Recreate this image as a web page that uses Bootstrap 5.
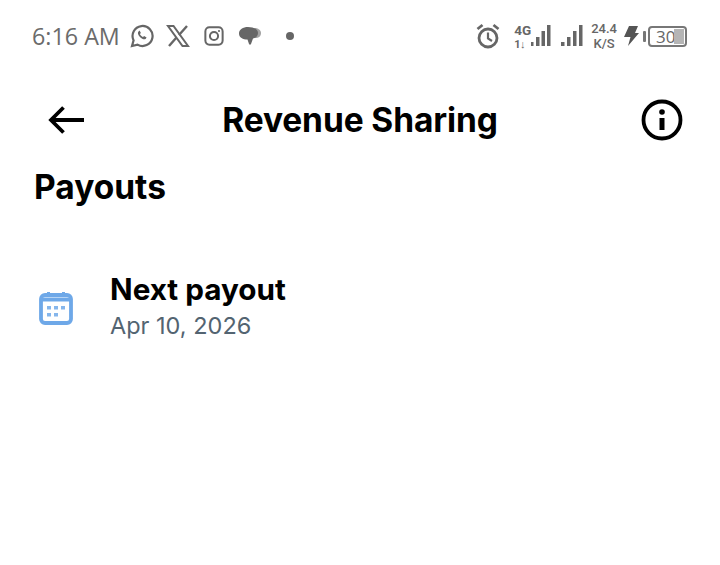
<!DOCTYPE html>
<html lang="en">
<head>
  <meta charset="UTF-8" />
  <meta name="viewport" content="width=device-width, initial-scale=1">
  <title>Revenue Sharing</title>
  <link href="https://cdn.jsdelivr.net/npm/bootstrap@5.3.0/dist/css/bootstrap.min.css" rel="stylesheet">
  <style>
    body {
      background-color: #fff;
      font-family: Inter, "Liberation Sans", sans-serif;
      color: #0f1419;
      margin: 0;
    }
    .status-bar {
      height: 72px;
      padding: 0 33px 0 32px;
      color: #666;
    }
    .status-time {
      font-family: "Open Sans", "Noto Sans", sans-serif;
      font-size: 23.3px;
      color: #6b6b6b;
    }
    .status-left { gap: 12px; }
    .whatsapp-icon { margin-left: -2px; }
    .insta-icon { margin-left: 2px; }
    .status-dot { margin-left: 12px; }
    .chat-icon { margin-left: 3px; }
    .alarm-icon { margin-left: 2px; margin-right: 14px; }
    .net-stack { margin-right: 10px; }
    .net-bars { margin-left: -2px; }
    .signal-icon { margin-right: 8px; }
    .speed-text { margin-right: 6px; }
    .bolt-icon { margin-right: 4px; }
    .tiny-text {
      font-family: Roboto, "Liberation Sans", sans-serif;
      font-size: 13px;
      font-weight: 500;
      line-height: 15px;
      color: #666;
      text-align: center;
    }
    .net-label {
      font-family: Roboto, "Liberation Sans", sans-serif;
      font-size: 13.5px;
      font-weight: 700;
      line-height: 16px;
      color: #666;
      width: 17px;
      white-space: nowrap;
    }
    .net-sub {
      font-size: 11px;
      line-height: 13px;
      letter-spacing: -0.5px;
    }
    .battery-nub {
      width: 3px;
      height: 11px;
      background-color: #777;
      border-radius: 1px;
      margin-right: 2px;
    }
    .battery-box {
      width: 39px;
      height: 21px;
      border: 2px solid #777;
      border-radius: 4px;
      font-family: "Open Sans", sans-serif;
      font-size: 17px;
      line-height: 17px;
      color: #666;
      padding-left: 6px;
      overflow: hidden;
    }
    .battery-fill {
      right: 1px;
      top: 1px;
      bottom: 1px;
      width: 10px;
      background-color: #b5b5b5;
    }
    .title-row {
      height: 96px;
      padding: 0 37px 0 48px;
    }
    .page-title {
      font-size: 33.5px;
      font-weight: 700;
      margin: 0 7px 0 0;
      letter-spacing: -0.1px;
      color: #000;
    }
    .section-title {
      font-size: 33.5px;
      font-weight: 700;
      line-height: 38px;
      margin: 0;
      padding-left: 34px;
      color: #000;
    }
    .payout-row {
      margin-top: 66px;
      padding-left: 39px;
      gap: 37px;
    }
    .payout-icon { margin-bottom: 2px; }
    .payout-label {
      font-size: 29.7px;
      font-weight: 700;
      line-height: 34px;
      color: #000;
    }
    .payout-date {
      font-size: 23.5px;
      line-height: 40px;
      color: #536471;
    }
  </style>
</head>
<body>
  <!-- Phone status bar -->
  <div class="status-bar d-flex align-items-center justify-content-between">
    <div class="status-left d-flex align-items-center">
      <span class="status-time">6:16 AM</span>
      <svg class="whatsapp-icon" width="24" height="24" viewBox="0 0 24 24" fill="none" stroke="#666" stroke-width="2.200"><path d="M2 22l1.600-5.600A10 10 0 1 1 7.500 20.600z"/><path d="M8.500 7.500c-1 1-.8 3 1.400 5.400 2.300 2.400 4.500 3 5.700 2l1-1.300-2.500-1.500-1.100 1c-1.300-.5-2.500-1.800-3.100-3.100l1-1.100-1.300-2.500z" fill="#666" stroke="none"/></svg>
      <svg width="24" height="22" viewBox="0 0 24 22" fill="none" stroke="#666"><path d="M2 1h5.500L22 21h-5.500z" stroke-width="2"/><path d="M21 1l-8 9M10.500 12.500L3 21" stroke-width="2.400"/></svg>
      <svg class="insta-icon" width="20" height="20" viewBox="0 0 22 22" fill="none" stroke="#666" stroke-width="2.200"><rect x="1.500" y="1.500" width="19" height="19" rx="4.500"/><circle cx="11" cy="11" r="4.500"/><circle cx="16.500" cy="5.500" r="1.200" fill="#666" stroke="none"/></svg>
      <svg class="chat-icon" width="22" height="20" viewBox="0 0 22 20" fill="#666"><path d="M15 2c4 0 7 2 7 5s-2 5-6 5z" opacity=".6"/><path d="M9 1c5 0 10 2 10 6 0 3-2 5-5 5.500L12 18c-.5 1-1.500 1-2 0l-1.500-4.500C4 13.500 0 11.500 0 7.500S4 1 9 1z"/></svg>
      <svg class="status-dot" width="10" height="10" viewBox="0 0 10 10" fill="#666"><circle cx="5" cy="5" r="4"/></svg>
    </div>
    <div class="d-flex align-items-center">
      <svg class="alarm-icon" width="24" height="26" viewBox="0 0 24 26" fill="none" stroke="#666" stroke-width="2.800"><circle cx="12" cy="15" r="9"/><path d="M12 9.500v6l4 2.500" stroke-width="2.200"/><path d="M1.500 6l5-4M22.500 6l-5-4"/></svg>
      <div class="net-stack d-flex align-items-center">
        <div class="net-label">4G<div class="net-sub">1↓</div></div>
        <svg class="net-bars" width="22" height="22" viewBox="0 0 22 22" fill="#666"><rect x="2" y="17" width="2.500" height="4"/><rect x="7" y="12" width="3.500" height="9"/><rect x="12.500" y="6" width="3.500" height="15"/><rect x="18" y="0" width="3.500" height="21"/></svg>
      </div>
      <svg class="signal-icon" width="22" height="22" viewBox="0 0 22 22" fill="#666"><rect x="0" y="17" width="3.500" height="4"/><rect x="6" y="12" width="3.500" height="9"/><rect x="12" y="6" width="3.500" height="15"/><rect x="18" y="0" width="3.500" height="21"/></svg>
      <div class="tiny-text speed-text">24.4<br>K/S</div>
      <svg class="bolt-icon" width="16" height="22" viewBox="0 0 16 22" fill="#555"><path d="M6 1h9l-3 7h4L5 21l2.500-9H1z"/></svg>
      <span class="battery-nub"></span>
      <div class="battery-box position-relative">30<span class="battery-fill position-absolute"></span></div>
    </div>
  </div>

  <!-- Title row -->
  <div class="title-row d-flex align-items-center justify-content-between">
    <svg width="38" height="30" viewBox="0 0 38 30" fill="none" stroke="#000" stroke-width="3.800"><path d="M36 15H3M15.500 2.500L3 15l12.500 12.500"/></svg>
    <h1 class="page-title">Revenue Sharing</h1>
    <svg width="42" height="42" viewBox="0 0 42 42" fill="none"><circle cx="21" cy="21" r="18.500" stroke="#000" stroke-width="3.800"/><circle cx="21" cy="13" r="2.800" fill="#000"/><rect x="18.500" y="19" width="5" height="12" fill="#000"/></svg>
  </div>

  <h2 class="section-title">Payouts</h2>

  <!-- Next payout -->
  <div class="payout-row d-flex align-items-center">
    <svg class="payout-icon" width="34" height="34" viewBox="0 0 34 34" fill="none"><rect x="2" y="4" width="30" height="28" rx="4" stroke="#6ea8e8" stroke-width="3.800"/><path d="M2 8.500h30" stroke="#6ea8e8" stroke-width="4"/><path d="M9.500 1v5M24.500 1v5" stroke="#6ea8e8" stroke-width="3"/><g fill="#85b6ec"><rect x="8" y="15" width="4" height="3.500"/><rect x="15" y="15" width="4" height="3.500"/><rect x="22" y="15" width="4" height="3.500"/><rect x="8" y="22" width="4" height="3.500"/><rect x="15" y="22" width="4" height="3.500"/></g></svg>
    <div>
      <div class="payout-label">Next payout</div>
      <div class="payout-date">Apr 10, 2026</div>
    </div>
  </div>

  <script src="https://cdn.jsdelivr.net/npm/bootstrap@5.3.0/dist/js/bootstrap.bundle.min.js"></script>
</body>
</html>
